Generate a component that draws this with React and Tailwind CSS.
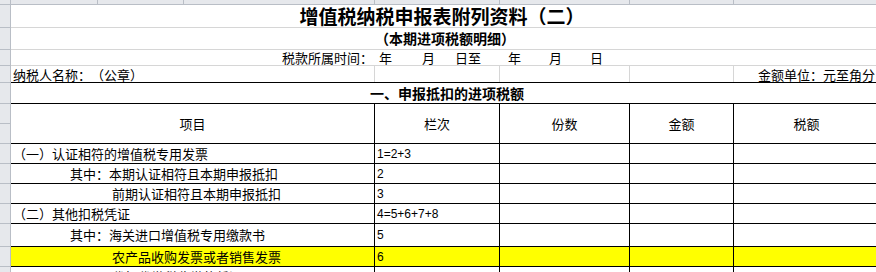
import React from "react";

const CJK = "font-['Noto_Sans_CJK_SC',sans-serif]";
const NUM = "font-['Liberation_Sans','Noto_Sans_CJK_SC',sans-serif]";

function Gutter({ split }) {
  if (split) {
    return (
      <div className="w-[11px] shrink-0 bg-[#e6e8ec] border-r border-[#b9bec6] flex flex-col">
        <div className="flex-1 border-b border-[#b9bec6]" />
        <div className="flex-1 border-b border-[#b9bec6]" />
      </div>
    );
  }
  return <div className="w-[11px] shrink-0 bg-[#e6e8ec] border-r border-b border-[#b9bec6]" />;
}

function DataRow({ h, label, pad, num, yellow }) {
  return (
    <div className={`flex ${h}`}>
      <Gutter />
      <div className={`flex-1 flex border-b border-black ${yellow ? "bg-[#ffff00]" : "bg-white"}`}>
        <div className={`w-[363px] shrink-0 flex items-center text-[13px] text-black whitespace-nowrap ${CJK} ${pad}`}>
          {label}
        </div>
        <div className={`w-[125px] shrink-0 border-l border-black flex items-center pl-[2px] text-[12px] text-black ${NUM}`}>
          {num}
        </div>
        <div className="w-[130px] shrink-0 border-l border-black" />
        <div className="w-[104px] shrink-0 border-l border-black" />
        <div className="w-[146px] shrink-0 border-l border-black" />
      </div>
    </div>
  );
}

export default function App() {
  return (
    <div className="w-[876px] h-[272px] overflow-hidden bg-white [text-spacing-trim:space-all]">
      <div className="w-[890px] flex flex-col">
        {/* column header strip */}
        <div className="flex h-[5px]">
          <div className="w-[11px] shrink-0 bg-[#e6e8ec] border-r border-b border-[#b9bec6]" />
          <div className="flex-1 flex bg-[#e6e8ec] border-b border-[#b9bec6]">
            <div className="w-[86px] shrink-0" />
            <div className="w-[86px] shrink-0 border-l border-[#b9bec6]" />
            <div className="w-[191px] shrink-0 border-l border-[#b9bec6]" />
            <div className="w-[125px] shrink-0 border-l border-[#b9bec6]" />
            <div className="w-[130px] shrink-0 border-l border-[#b9bec6]" />
            <div className="w-[104px] shrink-0 border-l border-[#b9bec6]" />
            <div className="flex-1 border-l border-[#b9bec6]" />
          </div>
        </div>

        {/* title */}
        <div className="flex h-[23px]">
          <Gutter />
          <div className={`w-[868px] shrink-0 border-b border-[#d6d6d6] flex items-center justify-center pr-[6px] text-[19px] font-bold text-black ${CJK}`}>
            增值税纳税申报表附列资料（二）
          </div>
        </div>

        {/* subtitle */}
        <div className="flex h-[22px]">
          <Gutter />
          <div className={`w-[868px] shrink-0 border-b border-[#d6d6d6] flex items-center justify-center text-[14px] font-bold text-black ${CJK}`}>
            （本期进项税额明细）
          </div>
        </div>

        {/* period */}
        <div className="flex h-[16px]">
          <Gutter />
          <div className={`flex-1 border-b border-[#d6d6d6] flex items-center whitespace-nowrap text-[13px] leading-none text-black ${CJK}`}>
            <span className="ml-[271px]">税款所属时间：</span>
            <span className="ml-[6px]">年</span>
            <span className="ml-[30px]">月</span>
            <span className="ml-[20px]">日至</span>
            <span className="ml-[27px]">年</span>
            <span className="ml-[28px]">月</span>
            <span className="ml-[28px]">日</span>
          </div>
        </div>

        {/* taxpayer */}
        <div className="flex h-[17px]">
          <Gutter />
          <div className={`flex-1 flex border-b border-black text-[13px] leading-none text-black ${CJK}`}>
            <div className="w-[363px] shrink-0 flex items-end pb-[1px] pl-[2px] whitespace-nowrap">纳税人名称：（公章）</div>
            <div className="w-[125px] shrink-0 border-l border-[#d6d6d6]" />
            <div className="w-[130px] shrink-0 border-l border-[#d6d6d6]" />
            <div className="w-[104px] shrink-0 border-l border-[#d6d6d6]" />
            <div className="w-[146px] shrink-0 border-l border-[#d6d6d6] flex items-end justify-end pb-[1px] pr-[4px] whitespace-nowrap">
              金额单位：元至角分
            </div>
          </div>
        </div>

        {/* section */}
        <div className="flex h-[21px]">
          <Gutter />
          <div className={`w-[868px] shrink-0 border-b border-black flex items-center justify-center pl-[4px] text-[14px] font-bold text-black ${CJK}`}>
            一、申报抵扣的进项税额
          </div>
        </div>

        {/* header */}
        <div className="flex h-[40px]">
          <Gutter split />
          <div className={`flex-1 flex border-b border-black text-[13px] text-black ${CJK}`}>
            <div className="w-[363px] shrink-0 flex items-center justify-center">项目</div>
            <div className="w-[125px] shrink-0 border-l border-black flex items-center justify-center">栏次</div>
            <div className="w-[130px] shrink-0 border-l border-black flex items-center justify-center">份数</div>
            <div className="w-[104px] shrink-0 border-l border-black flex items-center justify-center">金额</div>
            <div className="w-[146px] shrink-0 border-l border-black flex items-center justify-center">税额</div>
          </div>
        </div>

        <DataRow h="h-[20px]" label="（一）认证相符的增值税专用发票" pad="pl-[2px]" num="1=2+3" />
        <DataRow h="h-[20px]" label="其中：本期认证相符且本期申报抵扣" pad="pl-[59px]" num="2" />
        <DataRow h="h-[20px]" label="前期认证相符且本期申报抵扣" pad="pl-[101px]" num="3" />
        <DataRow h="h-[20px]" label="（二）其他扣税凭证" pad="pl-[2px]" num="4=5+6+7+8" />
        <DataRow h="h-[23px]" label="其中：海关进口增值税专用缴款书" pad="pl-[59px]" num="5" />
        <DataRow h="h-[20px]" label="农产品收购发票或者销售发票" pad="pl-[101px]" num="6" yellow />
        <DataRow h="h-[20px]" label="代扣代缴税收缴款凭证" pad="pl-[101px]" num="7" />
      </div>
    </div>
  );
}
